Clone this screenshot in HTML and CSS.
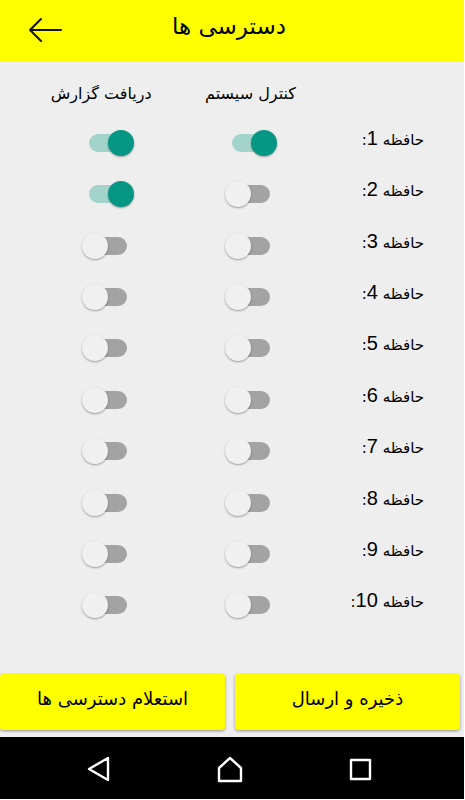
FILE: index.html
```
<!DOCTYPE html>
<html lang="fa">
<head>
    <meta charset="UTF-8">
    <meta name="viewport" content="width=device-width, initial-scale=1.0">
    <title>دسترسی ها</title>
    <link rel="stylesheet" href="styles.css">
</head>
<body>
    <header class="header">
        <button type="button" class="back-button" aria-label="بازگشت">
            <svg width="34" height="26" viewBox="0 0 34 26">
                <path d="M33 12H2M13 1L2 12L13 23" />
            </svg>
        </button>
        <h1 dir="rtl">دسترسی ها</h1>
    </header>

    <main class="content">
        <table class="access-table" dir="rtl">
            <thead>
                <tr>
                    <td></td>
                    <th id="system">کنترل سیستم</th>
                    <th class="report" id="report">دریافت گزارش</th>
                </tr>
            </thead>
            <tbody>
                <tr>
                    <th id="m1">حافظه <span class="num">1</span>:</th>
                    <td><input type="checkbox" class="switch" aria-labelledby="m1 system" checked></td>
                    <td><input type="checkbox" class="switch" aria-labelledby="m1 report" checked></td>
                </tr>
                <tr>
                    <th id="m2">حافظه <span class="num">2</span>:</th>
                    <td><input type="checkbox" class="switch" aria-labelledby="m2 system"></td>
                    <td><input type="checkbox" class="switch" aria-labelledby="m2 report" checked></td>
                </tr>
                <tr>
                    <th id="m3">حافظه <span class="num">3</span>:</th>
                    <td><input type="checkbox" class="switch" aria-labelledby="m3 system"></td>
                    <td><input type="checkbox" class="switch" aria-labelledby="m3 report"></td>
                </tr>
                <tr>
                    <th id="m4">حافظه <span class="num">4</span>:</th>
                    <td><input type="checkbox" class="switch" aria-labelledby="m4 system"></td>
                    <td><input type="checkbox" class="switch" aria-labelledby="m4 report"></td>
                </tr>
                <tr>
                    <th id="m5">حافظه <span class="num">5</span>:</th>
                    <td><input type="checkbox" class="switch" aria-labelledby="m5 system"></td>
                    <td><input type="checkbox" class="switch" aria-labelledby="m5 report"></td>
                </tr>
                <tr>
                    <th id="m6">حافظه <span class="num">6</span>:</th>
                    <td><input type="checkbox" class="switch" aria-labelledby="m6 system"></td>
                    <td><input type="checkbox" class="switch" aria-labelledby="m6 report"></td>
                </tr>
                <tr>
                    <th id="m7">حافظه <span class="num">7</span>:</th>
                    <td><input type="checkbox" class="switch" aria-labelledby="m7 system"></td>
                    <td><input type="checkbox" class="switch" aria-labelledby="m7 report"></td>
                </tr>
                <tr>
                    <th id="m8">حافظه <span class="num">8</span>:</th>
                    <td><input type="checkbox" class="switch" aria-labelledby="m8 system"></td>
                    <td><input type="checkbox" class="switch" aria-labelledby="m8 report"></td>
                </tr>
                <tr>
                    <th id="m9">حافظه <span class="num">9</span>:</th>
                    <td><input type="checkbox" class="switch" aria-labelledby="m9 system"></td>
                    <td><input type="checkbox" class="switch" aria-labelledby="m9 report"></td>
                </tr>
                <tr>
                    <th id="m10">حافظه <span class="num">10</span>:</th>
                    <td><input type="checkbox" class="switch" aria-labelledby="m10 system"></td>
                    <td><input type="checkbox" class="switch" aria-labelledby="m10 report"></td>
                </tr>
            </tbody>
        </table>
    </main>

    <div class="actions">
        <button type="button" class="action-button" dir="rtl">استعلام دسترسی ها</button>
        <button type="button" class="action-button" dir="rtl">ذخیره و ارسال</button>
    </div>

    <nav class="navbar">
        <button type="button" aria-label="Back">
            <svg width="26" height="28" viewBox="0 0 26 28">
                <path d="M22 2V24L3 13Z" />
            </svg>
        </button>
        <button type="button" aria-label="Home">
            <svg width="26" height="28" viewBox="0 0 26 28">
                <path d="M2 25V12L13 2L24 12V25Z" />
            </svg>
        </button>
        <button type="button" aria-label="Recent">
            <svg width="26" height="28" viewBox="0 0 26 28">
                <path d="M3 4H22V23H3Z" />
            </svg>
        </button>
    </nav>
</body>
</html>
```
FILE: styles.css
```
* {
    box-sizing: border-box;
}

body {
    display: flex;
    flex-direction: column;
    min-height: 100vh;
    margin: 0;
    border-right: 1px solid #fff;
    border-bottom: 1px solid #fff;
    background-color: #eee;
    color: #000;
    font-family: "DejaVu Sans", sans-serif;
}

button {
    padding: 0;
    border: none;
    background: none;
    color: inherit;
    font-family: inherit;
    cursor: pointer;
}

svg {
    display: block;
    fill: none;
    stroke-linecap: round;
    stroke-linejoin: round;
}

.header {
    display: grid;
    grid-template-columns: 34px 1fr 34px;
    align-items: center;
    height: 62px;
    padding: 0 34px 0 28px;
    background-color: #ff0;
}

.back-button svg {
    stroke: #111;
    stroke-width: 2;
}

.header h1 {
    margin: 0;
    padding-bottom: 10px;
    font-size: 23px;
    font-weight: normal;
    line-height: 32px;
    text-align: center;
}

.content {
    display: flex;
    flex: 1;
    padding: 0 0 43px 37px;
}

.access-table,
.access-table tbody {
    display: flex;
    flex: 1;
    flex-direction: column;
}

.access-table tr {
    display: grid;
    flex: 1;
    grid-template-columns: repeat(3, 1fr);
    align-items: center;
}

.access-table thead tr {
    height: 55px;
}

.access-table th,
.access-table td {
    padding: 0;
    font-weight: normal;
    line-height: 26px;
    text-align: center;
    white-space: nowrap;
}

.access-table td {
    display: flex;
    justify-content: center;
}

.access-table thead th {
    padding-top: 8px;
    font-size: 16px;
}

.access-table thead .report {
    padding-right: 14px;
}

.access-table tbody th {
    padding: 0 40px 8px 0;
    font-size: 15px;
    text-align: right;
}

.num {
    font-family: "Liberation Sans", Arial, sans-serif;
    font-size: 20px;
}

.switch {
    position: relative;
    display: flex;
    align-items: center;
    width: 52px;
    height: 26px;
    margin: 0;
    appearance: none;
    direction: ltr;
    cursor: pointer;
}

/* track */
.switch::before {
    content: "";
    position: absolute;
    inset: 4px 7px;
    border-radius: 9px;
    background-color: #a3a3a3;
}

/* thumb */
.switch::after {
    content: "";
    position: relative;
    width: 26px;
    height: 26px;
    border-radius: 50%;
    background-color: #f0f0f0;
    box-shadow: 0 1px 2px rgba(0, 0, 0, 0.35);
}

.switch:checked {
    justify-content: flex-end;
}

.switch:checked::before {
    background-color: #a3d4cb;
}

.switch:checked::after {
    background-color: #069684;
}

.actions {
    display: grid;
    grid-template-columns: 1fr 1fr;
    gap: 10px;
    padding: 0 4px 7px 0;
}

.action-button {
    height: 56px;
    padding-bottom: 8px;
    border-radius: 3px;
    background-color: #ff0;
    box-shadow: 0 1px 3px rgba(0, 0, 0, 0.4);
    font-size: 18px;
}

.navbar {
    display: grid;
    grid-template-columns: repeat(3, 1fr);
    justify-items: center;
    align-items: center;
    height: 62px;
    padding: 4px 38px 0 34px;
    background-color: #000;
}

.navbar svg {
    stroke: #fff;
    stroke-width: 2.4;
}
```
